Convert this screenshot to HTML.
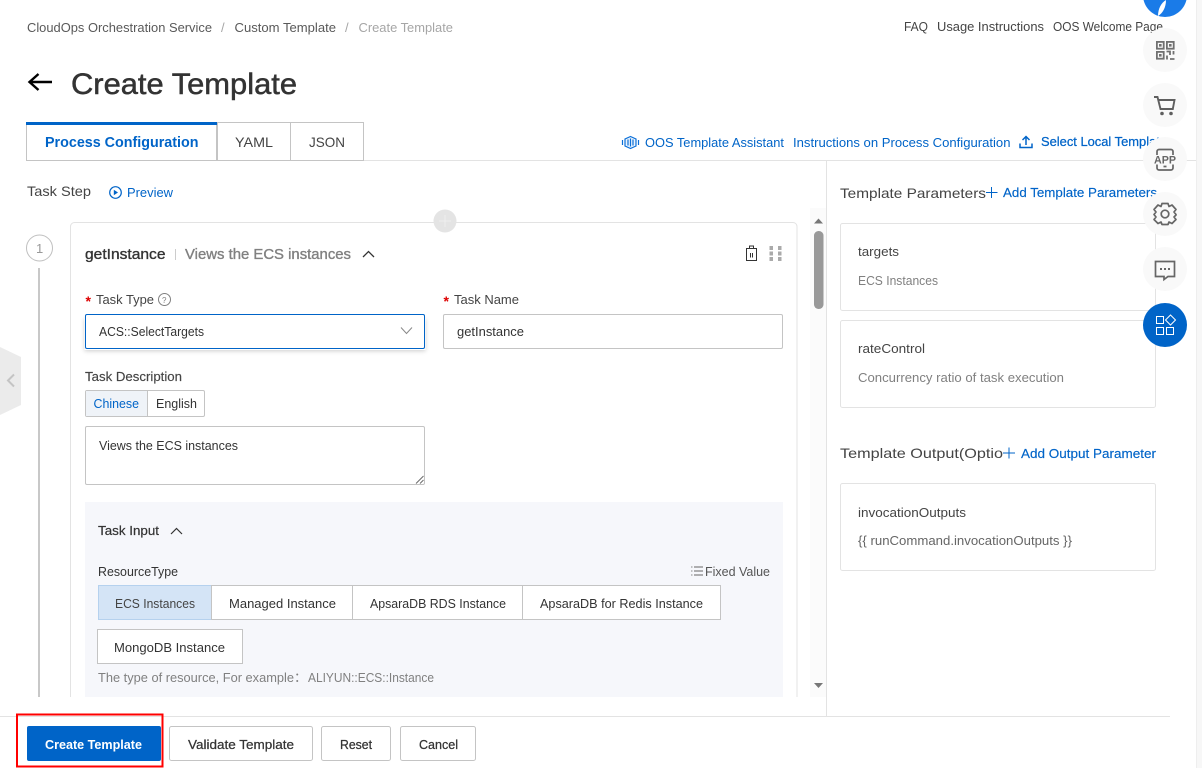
<!DOCTYPE html>
<html><head><meta charset="utf-8"><title>Create Template</title>
<style>
html,body{margin:0;padding:0;background:#fff;width:1202px;height:768px;overflow:hidden}
svg{display:block}
text{font-family:"Liberation Sans","Noto Sans CJK SC",sans-serif;font-size:13px;fill:#333;white-space:pre}
.g{fill:#595959}.l{fill:#a6a6a6}.m{fill:#808080}
.b{fill:#0064c8}
.h{font-size:14px}
.box{fill:#fff;stroke:#c4c4c4}
.card{fill:#fff;stroke:#e3e3e3}
.circ{fill:#f9f9f9}
.ic{fill:none;stroke:#666;stroke-width:1.7}
</style></head><body>
<svg width="1202" height="768" viewBox="0 0 1202 768" xmlns="http://www.w3.org/2000/svg">
<rect x="1196" y="0" width="6" height="768" fill="#f7f7f7"/>
<rect x="1196" y="0" width="1" height="768" fill="#eeeeee"/>

<!-- breadcrumb -->
<text x="27" y="32" textLength="185" lengthAdjust="spacingAndGlyphs" class="g">CloudOps Orchestration Service</text>
<text x="221" y="32" class="l">/</text>
<text x="234.500" y="32" textLength="101.500" lengthAdjust="spacingAndGlyphs" class="g">Custom Template</text>
<text x="345" y="32" class="l">/</text>
<text x="358.500" y="32" textLength="94.500" lengthAdjust="spacingAndGlyphs" class="l">Create Template</text>

<!-- title -->
<path d="M52 82H30M38.500 74L29.500 82L38.500 90" fill="none" stroke="#000" stroke-width="2.400"/>
<text x="71" y="94" textLength="226" lengthAdjust="spacingAndGlyphs" style="font-size:30px;fill:#333;stroke:#333;stroke-width:.5px">Create Template</text>

<!-- top links -->
<text x="904" y="31" textLength="24" lengthAdjust="spacingAndGlyphs" style="fill:#444">FAQ</text>
<text x="937" y="31" textLength="107" lengthAdjust="spacingAndGlyphs" style="fill:#444">Usage Instructions</text>
<text x="1053" y="31" textLength="110" lengthAdjust="spacingAndGlyphs" style="fill:#444">OOS Welcome Page</text>

<!-- tabs -->
<path d="M217 160.500H1196" stroke="#e3e3e3"/>
<path d="M26.500 125V160.500H216.500V125" fill="#fff" stroke="#c4c4c4"/>
<rect x="217.500" y="122.500" width="73" height="38" class="box"/>
<rect x="290.500" y="122.500" width="73" height="38" class="box"/>
<rect x="26" y="122" width="191" height="3" fill="#0064c8"/>
<text x="45" y="147" textLength="153.500" lengthAdjust="spacingAndGlyphs" class="b" style="font-size:14.500px;font-weight:bold">Process Configuration</text>
<text x="235" y="147" textLength="38" lengthAdjust="spacingAndGlyphs" class="h" style="fill:#444">YAML</text>
<text x="309" y="147" textLength="36" lengthAdjust="spacingAndGlyphs" class="h" style="fill:#444">JSON</text>

<!-- tab right links -->
<path d="M630.500 136.500L636 139V146L630.500 148.500L625 146V139Z" fill="#eaf3fd" stroke="#0a6fd8" stroke-width="1.200"/>
<path d="M628 139.500V145.500M630.500 138.500V146.500M633 139.500V145.500" stroke="#0a6fd8" stroke-width="1.200"/>
<path d="M622.500 140V145M638.500 140V145" stroke="#0a6fd8" stroke-width="1.200"/>
<text x="645" y="147" textLength="139" lengthAdjust="spacingAndGlyphs" class="b">OOS Template Assistant</text>
<text x="793" y="147" textLength="217.500" lengthAdjust="spacingAndGlyphs" class="b">Instructions on Process Configuration</text>
<path d="M1020 143.500V147.500H1032V143.500M1026 145V137M1022.500 140L1026 136.500L1029.500 140" fill="none" stroke="#0064c8" stroke-width="1.500"/>
<text x="1041" y="146" textLength="126" lengthAdjust="spacingAndGlyphs" class="b" style="stroke:#0064c8;stroke-width:.25px">Select Local Template</text>

<!-- left pane header -->
<text x="27" y="196" textLength="64" lengthAdjust="spacingAndGlyphs" class="h" style="fill:#444">Task Step</text>
<circle cx="115.500" cy="192.500" r="5.800" fill="none" stroke="#0064c8" stroke-width="1.200"/>
<path d="M113.800 189.800V195.200L118 192.500Z" fill="#0064c8"/>
<text x="127" y="197" textLength="46" lengthAdjust="spacingAndGlyphs" class="b">Preview</text>

<!-- dividers -->
<rect x="826" y="160" width="1" height="556" fill="#e3e3e3"/>
<rect x="810" y="208" width="16" height="489" fill="#fbfbfb"/>
<rect x="814" y="231" width="9.500" height="78" rx="4.500" fill="#999"/>
<path d="M814 223.500H823L818.500 218.500Z" fill="#777"/>
<path d="M814 683H823L818.500 688Z" fill="#777"/>

<!-- collapse handle -->
<path d="M0 347L21 357V405L0 415Z" fill="#ebebeb"/>
<path d="M14 374.500L8 380.500L14 386.500" fill="none" stroke="#c4c4c4" stroke-width="2"/>

<!-- step -->
<circle cx="39.500" cy="248" r="13" fill="#fff" stroke="#c0c0c0"/>
<text x="36" y="253" style="fill:#999">1</text>
<rect x="38" y="268" width="2" height="429" fill="#c8c8c8"/>

<!-- task card -->
<path d="M70.500 697V226.500A4 4 0 0 1 74.500 222.500H793A4 4 0 0 1 797 226.500V697" fill="#fff" stroke="#e3e3e3"/>
<circle cx="445" cy="221" r="11.500" fill="#e4e4e4"/>
<path d="M439 221H451M445 215V227" stroke="#eeeeee" stroke-width="1"/>

<text x="85" y="259" textLength="80.500" lengthAdjust="spacingAndGlyphs" style="font-size:14.500px;stroke:#333;stroke-width:.35px">getInstance</text>
<rect x="175" y="249" width="1" height="11" fill="#ccc"/>
<text x="185" y="259" textLength="166" lengthAdjust="spacingAndGlyphs" class="m" style="font-size:14.500px;stroke:#808080;stroke-width:.35px">Views the ECS instances</text>
<path d="M363 257L368.500 251.500L374 257" fill="none" stroke="#333" stroke-width="1.300"/>

<!-- trash + drag -->
<path d="M746 248.500H757M749.500 248V246H753.500V248M746.500 248.500V260.500H756.500V248.500M750.500 253V257.500M752.500 253V257.500" fill="none" stroke="#333" stroke-width="1"/>
<g fill="#aaa"><rect x="769.500" y="246" width="3.500" height="4"/><rect x="778" y="246" width="3.500" height="4"/><rect x="769.500" y="251.500" width="3.500" height="4"/><rect x="778" y="251.500" width="3.500" height="4"/><rect x="769.500" y="257" width="3.500" height="4"/><rect x="778" y="257" width="3.500" height="4"/></g>

<!-- form row -->
<text x="85.500" y="306" style="fill:#d00;font-size:14px;font-weight:bold">*</text>
<text x="96" y="304" textLength="58" lengthAdjust="spacingAndGlyphs" style="fill:#444">Task Type</text>
<circle cx="164.500" cy="299.500" r="6" fill="none" stroke="#808080"/>
<text x="162" y="303" style="font-size:8px;fill:#808080">?</text>
<text x="443.500" y="306" style="fill:#d00;font-size:14px;font-weight:bold">*</text>
<text x="454" y="304" textLength="65" lengthAdjust="spacingAndGlyphs" style="fill:#444">Task Name</text>

<rect x="84.500" y="318" width="341" height="32" fill="#fff" style="filter:drop-shadow(0 1px 2px rgba(0,0,0,.2))"/>
<rect x="85.500" y="314.500" width="339" height="34" rx="1.500" fill="#fff" stroke="#0064c8"/>
<text x="99" y="336" textLength="105" lengthAdjust="spacingAndGlyphs">ACS::SelectTargets</text>
<path d="M401 327.500L406.500 333.500L412 327.500" fill="none" stroke="#888" stroke-width="1"/>
<rect x="443.500" y="314.500" width="339" height="34" rx="1.500" class="box"/>
<text x="457" y="336" textLength="67" lengthAdjust="spacingAndGlyphs">getInstance</text>

<text x="85" y="381" textLength="97" lengthAdjust="spacingAndGlyphs" style="fill:#444;stroke:#444;stroke-width:.15px">Task Description</text>
<rect x="85.500" y="390.500" width="119" height="26" rx="1.500" class="box"/>
<rect x="86" y="391" width="61" height="25" fill="#eff3f8"/>
<rect x="147" y="391" width="1" height="25" fill="#c4c4c4"/>
<text x="93.500" y="408" textLength="45.500" lengthAdjust="spacingAndGlyphs" class="b">Chinese</text>
<text x="156" y="408" textLength="41" lengthAdjust="spacingAndGlyphs">English</text>

<rect x="85.500" y="426.500" width="339" height="58" rx="1.500" class="box"/>
<text x="99" y="450" textLength="139" lengthAdjust="spacingAndGlyphs">Views the ECS instances</text>
<path d="M416 483.500L423.500 476M420 483.500L423.500 480" stroke="#666" stroke-width=".9"/>

<!-- task input panel -->
<rect x="85" y="502" width="698" height="195" fill="#f6f7fb"/>
<text x="98" y="535" textLength="61" lengthAdjust="spacingAndGlyphs" style="stroke:#333;stroke-width:.2px">Task Input</text>
<path d="M171 534L176.500 528.500L182 534" fill="none" stroke="#333" stroke-width="1.200"/>
<text x="98" y="576" textLength="80" lengthAdjust="spacingAndGlyphs">ResourceType</text>
<path d="M694 567H703M694 571H703M694 575H703" stroke="#666"/>
<path d="M691 567H692.500M691 571H692.500M691 575H692.500" stroke="#888"/>
<text x="705" y="576" textLength="65" lengthAdjust="spacingAndGlyphs" style="fill:#555">Fixed Value</text>

<rect x="98.500" y="585.500" width="113" height="34" fill="#d4e4f6" stroke="#b5d1ee"/>
<text x="115" y="608" textLength="80" lengthAdjust="spacingAndGlyphs" style="fill:#444">ECS Instances</text>
<rect x="211.500" y="585.500" width="141" height="34" class="box"/>
<text x="229" y="608" textLength="107" lengthAdjust="spacingAndGlyphs">Managed Instance</text>
<rect x="352.500" y="585.500" width="170" height="34" class="box"/>
<text x="370" y="608" textLength="136" lengthAdjust="spacingAndGlyphs">ApsaraDB RDS Instance</text>
<rect x="522.500" y="585.500" width="198" height="34" class="box"/>
<text x="540" y="608" textLength="163" lengthAdjust="spacingAndGlyphs">ApsaraDB for Redis Instance</text>
<rect x="97.500" y="629.500" width="145" height="34" class="box"/>
<text x="114" y="652" textLength="111" lengthAdjust="spacingAndGlyphs">MongoDB Instance</text>
<text x="98" y="682" textLength="196" lengthAdjust="spacingAndGlyphs" class="m">The type of resource, For example</text>
<text x="294" y="682" class="m">：</text>
<text x="308" y="682" textLength="126" lengthAdjust="spacingAndGlyphs" class="m">ALIYUN::ECS::Instance</text>

<!-- right column -->
<text x="840" y="198" textLength="146" lengthAdjust="spacingAndGlyphs" class="h" style="fill:#444">Template Parameters</text>
<path d="M986 192.500H997.500M991.500 187V198" stroke="#0064c8" stroke-width="1"/>
<text x="1003" y="197" textLength="154" lengthAdjust="spacingAndGlyphs" class="b" style="stroke:#0064c8;stroke-width:.15px">Add Template Parameters</text>

<rect x="840.500" y="223.500" width="315" height="87" rx="2" class="card"/>
<text x="858" y="256" textLength="41" lengthAdjust="spacingAndGlyphs" style="fill:#444">targets</text>
<text x="858" y="285" textLength="80" lengthAdjust="spacingAndGlyphs" class="m">ECS Instances</text>
<rect x="840.500" y="320.500" width="315" height="87" rx="2" class="card"/>
<text x="858" y="353" textLength="67" lengthAdjust="spacingAndGlyphs" style="fill:#444">rateControl</text>
<text x="858" y="382" textLength="206" lengthAdjust="spacingAndGlyphs" class="m">Concurrency ratio of task execution</text>

<text x="840" y="458" textLength="163" lengthAdjust="spacingAndGlyphs" class="h" style="fill:#444">Template Output(Optio</text>
<path d="M1003 453H1015M1009 447.500V458.500" stroke="#0064c8" stroke-width="1"/>
<text x="1021" y="458" textLength="135" lengthAdjust="spacingAndGlyphs" class="b" style="stroke:#0064c8;stroke-width:.15px">Add Output Parameter</text>

<rect x="840.500" y="483.500" width="315" height="87" rx="2" class="card"/>
<text x="858" y="517" textLength="108" lengthAdjust="spacingAndGlyphs" style="fill:#444">invocationOutputs</text>
<text x="858" y="545" textLength="214" lengthAdjust="spacingAndGlyphs" style="fill:#666">{{ runCommand.invocationOutputs }}</text>

<!-- footer -->
<rect x="0" y="697" width="826" height="19" fill="#fff"/>
<rect x="0" y="716" width="1170" height="1" fill="#e3e3e3"/>
<rect x="27" y="726" width="134" height="35" rx="2" fill="#0064c8"/>
<text x="45" y="749" textLength="97" lengthAdjust="spacingAndGlyphs" style="fill:#fff;font-weight:bold">Create Template</text>
<rect x="17" y="714.500" width="145.500" height="52" fill="none" stroke="#f00" stroke-width="2"/>
<rect x="169.500" y="726.500" width="143" height="34" rx="2" class="box"/>
<text x="188" y="749" textLength="106" lengthAdjust="spacingAndGlyphs" style="stroke:#333;stroke-width:.25px">Validate Template</text>
<rect x="321.500" y="726.500" width="69" height="34" rx="2" class="box"/>
<text x="340" y="749" textLength="32" lengthAdjust="spacingAndGlyphs" style="stroke:#333;stroke-width:.25px">Reset</text>
<rect x="400.500" y="726.500" width="75" height="34" rx="2" class="box"/>
<text x="419" y="749" textLength="39" lengthAdjust="spacingAndGlyphs" style="stroke:#333;stroke-width:.25px">Cancel</text>

<!-- floating buttons -->
<circle cx="1165" cy="-5" r="22" fill="#1a7be8"/>
<path d="M1158 16C1158 9 1161 3 1166 0C1166 7 1163 13 1158 16Z" fill="#fff"/>

<circle cx="1165" cy="50" r="22" class="circ"/>
<g fill="none" stroke="#707070" stroke-width="1.800">
<rect x="1156.900" y="41.900" width="6.800" height="6.800"/><rect x="1166.900" y="41.900" width="6.800" height="6.800"/><rect x="1156.900" y="51.900" width="6.800" height="6.800"/>
<path d="M1166.500 51.500H1170V55M1173.500 51V54.500M1167 59.500V55.500M1170 59H1174.500"/>
</g>
<g fill="#707070"><rect x="1159" y="44" width="2.600" height="2.600"/><rect x="1169" y="44" width="2.600" height="2.600"/><rect x="1159" y="54" width="2.600" height="2.600"/></g>

<circle cx="1165" cy="105" r="22" class="circ"/>
<path d="M1154 97H1157.500L1160.500 109H1172.800L1174.500 100H1158.500" fill="none" stroke="#5f5f5f" stroke-width="1.900"/>
<circle cx="1162" cy="113.500" r="1.800" fill="#5f5f5f"/><circle cx="1171" cy="113.500" r="1.800" fill="#5f5f5f"/>

<circle cx="1165" cy="159" r="22" class="circ"/>
<path d="M1157 155V151.500A2 2 0 0 1 1159 149.500H1171A2 2 0 0 1 1173 151.500V155M1157 164.500V168A2 2 0 0 0 1159 170H1171A2 2 0 0 0 1173 168V164.500M1163.500 166.500H1166.500" class="ic"/>
<text x="1154" y="163.500" textLength="22" lengthAdjust="spacingAndGlyphs" style="font-size:11px;font-weight:bold;fill:#666">APP</text>

<circle cx="1165" cy="214" r="22" class="circ"/>
<path d="M1162 203.500H1168L1169 206.500L1172 205L1176 209.500L1174 212L1176 214.500V215L1174 217L1176 219.500L1172 223.500L1169 222L1168 224.500H1162L1161 222L1158 223.500L1154 219.500L1156 217L1154 214.500L1156 212L1154 209.500L1158 205L1161 206.500Z" class="ic" stroke-linejoin="round"/>
<circle cx="1165" cy="214" r="3.800" class="ic"/>

<circle cx="1165" cy="269" r="22" class="circ"/>
<path d="M1155.500 261.500H1174.500V276.500H1168L1164 279.500V276.500H1155.500Z" class="ic"/>
<g fill="#666"><rect x="1160" y="268" width="2" height="2"/><rect x="1164" y="268" width="2" height="2"/><rect x="1168" y="268" width="2" height="2"/></g>

<circle cx="1165" cy="325" r="22" fill="#0064c8"/>
<g fill="none" stroke="#fff" stroke-width="1">
<rect x="1156.500" y="316.500" width="7" height="7"/>
<rect x="1156.500" y="327.500" width="7" height="7"/>
<rect x="1166.500" y="327.500" width="7" height="7"/>
<path d="M1170.500 315L1175.500 320L1170.500 325L1165.500 320Z"/>
</g>
</svg>
</body></html>
